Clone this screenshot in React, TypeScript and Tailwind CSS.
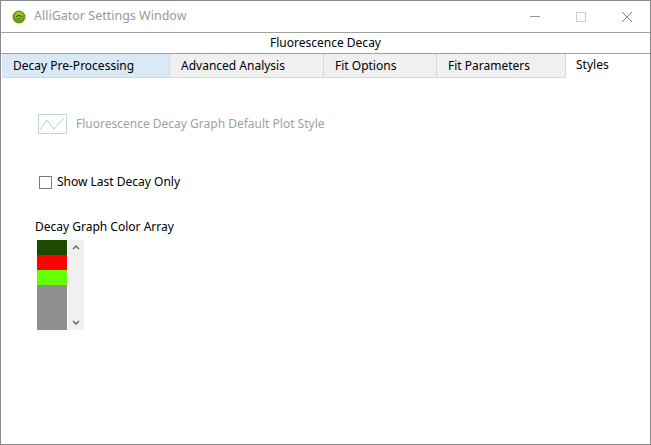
import React from 'react';

const tabs = [
  { label: 'Decay Pre-Processing', w: 'w-[168px]', cls: 'bg-[#d9e9f8]' },
  { label: 'Advanced Analysis', w: 'w-[154px]', cls: 'bg-[#f0f0f0]' },
  { label: 'Fit Options', w: 'w-[113px]', cls: 'bg-[#f0f0f0]' },
  { label: 'Fit Parameters', w: 'w-[129px]', cls: 'bg-[#f0f0f0]' },
];

const App: React.FC = () => {
  return (
    <div className="w-[651px] h-[445px] bg-white border border-[#8a8a8a] flex flex-col text-[12px] text-black overflow-hidden" style={{ fontFamily: '"Noto Sans", "Open Sans", sans-serif' }}>
      {/* title bar */}
      <div className="h-[32px] flex items-center border-b border-[#a0a0a0] shrink-0">
        <svg width="14" height="14" viewBox="0 0 14 14" className="ml-[11px] mr-[8px]">
          <circle cx="7" cy="7" r="6.5" fill="#6a9a10" />
          <circle cx="7" cy="6" r="4" fill="#9ccc2a" />
          <path d="M4 7 Q7 4 10 7 M5 9 Q7 8 9 9" stroke="#3d5f05" strokeWidth="1.2" fill="none" />
        </svg>
        <span className="text-[#999999] text-[12.5px]">AlliGator Settings Window</span>
        <div className="ml-auto flex items-center h-full">
          <div className="w-[46px] flex justify-center"><div className="w-[10px] h-px bg-[#9a9a9a]" /></div>
          <div className="w-[46px] flex justify-center"><div className="w-[10px] h-[10px] border border-[#d0d0d0]" /></div>
          <div className="w-[46px] flex justify-center">
            <svg width="12" height="12" viewBox="0 0 12 12"><path d="M1 1L11 11M11 1L1 11" stroke="#8a8a8a" strokeWidth="1" /></svg>
          </div>
        </div>
      </div>
      {/* section title */}
      <div className="h-[21px] flex items-center justify-center border-b border-[#a0a0a0] shrink-0">Fluorescence Decay</div>
      {/* tabs */}
      <div className="flex h-[24px] shrink-0 pl-[1px]">
        {tabs.map(t => (
          <div key={t.label} className={`${t.w} ${t.cls} h-full flex items-center pl-[11px] border-r border-b border-[#d9d9d9]`}>{t.label}</div>
        ))}
        <div className="w-[75px] h-full flex items-start pt-[2px] pl-[10px] bg-white">Styles</div>
      </div>
      {/* content */}
      <div className="flex flex-col pl-[37px] pt-[36px]">
        <div className="flex items-center gap-[9px]">
          <div className="w-[29px] h-[20px] border border-[#c6d3e0] flex items-center justify-center">
            <svg width="27" height="18" viewBox="0 0 27 18"><path d="M1 15L8 5L15 14L25 3" stroke="#b8cbe0" strokeWidth="1" fill="none" /></svg>
          </div>
          <span className="text-[#a0a0a0]">Fluorescence Decay Graph Default Plot Style</span>
        </div>
        <div className="flex items-center gap-[5px] mt-[39px] ml-[1px]">
          <div className="w-[13px] h-[13px] border border-[#7a7a7a] bg-white" />
          <span>Show Last Decay Only</span>
        </div>
        <div className="mt-[27px] -ml-[3px]">Decay Graph Color Array</div>
        <div className="flex mt-[4px] -ml-[1px] h-[90px]">
          <div className="w-[30px] flex flex-col">
            <div className="h-[15px] bg-[#1e4a00]" />
            <div className="h-[15px] bg-[#ff0000]" />
            <div className="h-[15px] bg-[#66ff00]" />
            <div className="flex-1 bg-[#8f8f8f]" />
          </div>
          <div className="w-[16px] ml-px bg-[#f0f0f0] flex flex-col justify-between items-center py-[4px]">
            <svg width="8" height="6" viewBox="0 0 8 6"><path d="M1 5L4 2L7 5" stroke="#606060" strokeWidth="1.3" fill="none" /></svg>
            <svg width="8" height="6" viewBox="0 0 8 6"><path d="M1 1L4 4L7 1" stroke="#606060" strokeWidth="1.3" fill="none" /></svg>
          </div>
        </div>
      </div>
    </div>
  );
};

export default App;
